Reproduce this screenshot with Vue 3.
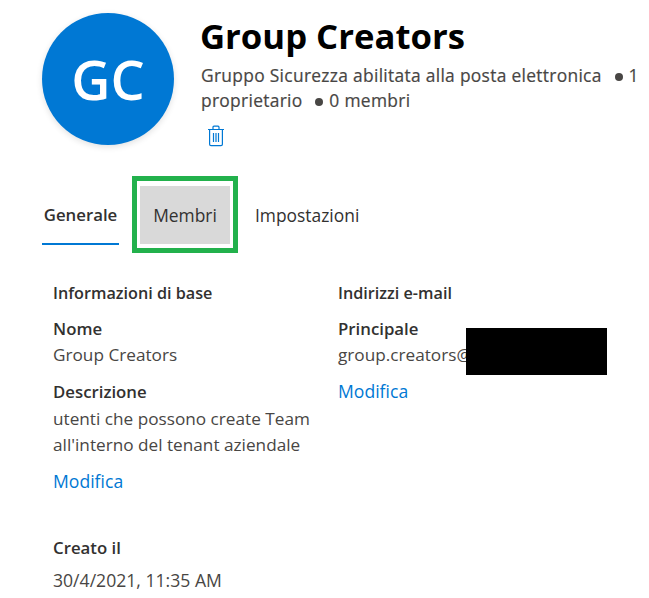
<template>
  <div class="page">
    <header class="head">
      <div class="avatar">GC</div>
      <div class="head-text">
        <h1>Group Creators</h1>
        <p class="sub">Gruppo Sicurezza abilitata alla posta elettronica <span class="dot"></span>1 proprietario <span class="dot"></span>0 membri</p>
        <svg class="trash" width="18" height="22" viewBox="0 0 18 22" fill="none" stroke="#0078d4" stroke-width="1.2">
          <path d="M1 4.5h16M6 4.5V2.2c0-.6.4-1 1-1h4c.6 0 1 .4 1 1v2.3" />
          <path d="M2.6 4.5v14.8c0 .8.6 1.4 1.4 1.4h10c.8 0 1.4-.6 1.4-1.4V4.5" />
          <path d="M6.5 8v9M9 8v9M11.5 8v9" />
        </svg>
      </div>
    </header>

    <nav class="tabs">
      <div class="tab active">Generale</div>
      <div class="highlight"><div class="tab hovered">Membri</div></div>
      <div class="tab">Impostazioni</div>
    </nav>

    <section class="cols">
      <div class="col">
        <h2>Informazioni di base</h2>
        <h3>Nome</h3>
        <p>Group Creators</p>
        <h3>Descrizione</h3>
        <p class="desc">utenti che possono create Team all'interno del tenant aziendale</p>
        <a class="link first">Modifica</a>
        <h3 class="created">Creato il</h3>
        <p class="date">30/4/2021, 11:35 AM</p>
      </div>
      <div class="col">
        <h2>Indirizzi e-mail</h2>
        <div class="mail">
          <h3>Principale</h3>
          <p>group.creators@</p>
          <div class="redact"></div>
        </div>
        <a class="link">Modifica</a>
      </div>
    </section>
  </div>
</template>

<script setup>
</script>

<style>
html, body { background: #fff; }
</style>

<style scoped>
.page {
  width: 649px;
  height: 598px;
  overflow: hidden;
  box-sizing: border-box;
  padding: 13px 0 0 42px;
  font-family: "Open Sans", "Noto Sans", sans-serif;
  color: #323130;
  font-size: 17px;
}
.head { display: flex; gap: 27px; }
.avatar {
  width: 132px;
  height: 132px;
  flex: none;
  border-radius: 50%;
  background: #0078d4;
  color: #fff;
  font-size: 54px;
  font-weight: 600;
  display: flex;
  align-items: center;
  justify-content: center;
  box-shadow: 0 2px 6px rgba(0,0,0,.12);
}
.head-text { width: 445px; margin-right: -30px; }
h1 {
  margin: 0 0 0 -1px;
  font-size: 34.7px;
  line-height: 46px;
  font-weight: 700;
  color: #000;
}
.sub {
  margin: 4px 0 0;
  font-size: 17.4px;
  letter-spacing: .3px;
  -webkit-text-stroke: .2px #484644;
  line-height: 25px;
  color: #484644;
}
.dot {
  display: inline-block;
  width: 8px;
  height: 8px;
  border-radius: 50%;
  background: #484644;
  margin: 0 6px 1px 8px;
}
.trash { display: block; margin: 12px 0 0 6px; }
.tabs { display: flex; align-items: center; margin-top: 29px; }
.tab { font-size: 17.4px; line-height: 22px; padding: 18px 0; }
.tab.active {
  width: 77px;
  text-align: center;
  font-size: 16.8px;
  font-weight: 600;
  border-bottom: 2px solid #0078d4;
  padding: 18px 0 17px;
  margin-top: 2px;
}
.highlight {
  margin: 0 17px 0 13px;
  border: 5px solid #22b14c;
  padding: 5px 3px 4px;
  width: 90px;
}
.tab.hovered {
  background: #d9d9d9;
  text-align: center;
  padding: 18px 0;
}
.cols {
  display: grid;
  grid-template-columns: 285px 290px;
  margin: 28px 0 0 11px;
}
.col { min-width: 0; }
h2 { margin: 0 0 1px; font-size: 16.2px; line-height: 24px; font-weight: 600; }
h3 { margin: 12px 0 0; font-size: 16.8px; line-height: 24px; font-weight: 600; }
p { margin: 1px 0 0; font-size: 17.2px; line-height: 26px; color: #484644; }
.col p { width: 270px; }
.col .desc { margin-top: 2px; }
.mail { position: relative; }
.col .mail p { white-space: nowrap; }
.redact {
  position: absolute;
  left: 128px;
  top: 11px;
  width: 141px;
  height: 47px;
  background: #000;
}
.link { display: block; color: #0078d4; line-height: 24px; margin-top: 11px; font-size: 17.6px; }
.created { margin-top: 43px; }
.col .date { margin-top: 7px; font-size: 17.6px; }
</style>
